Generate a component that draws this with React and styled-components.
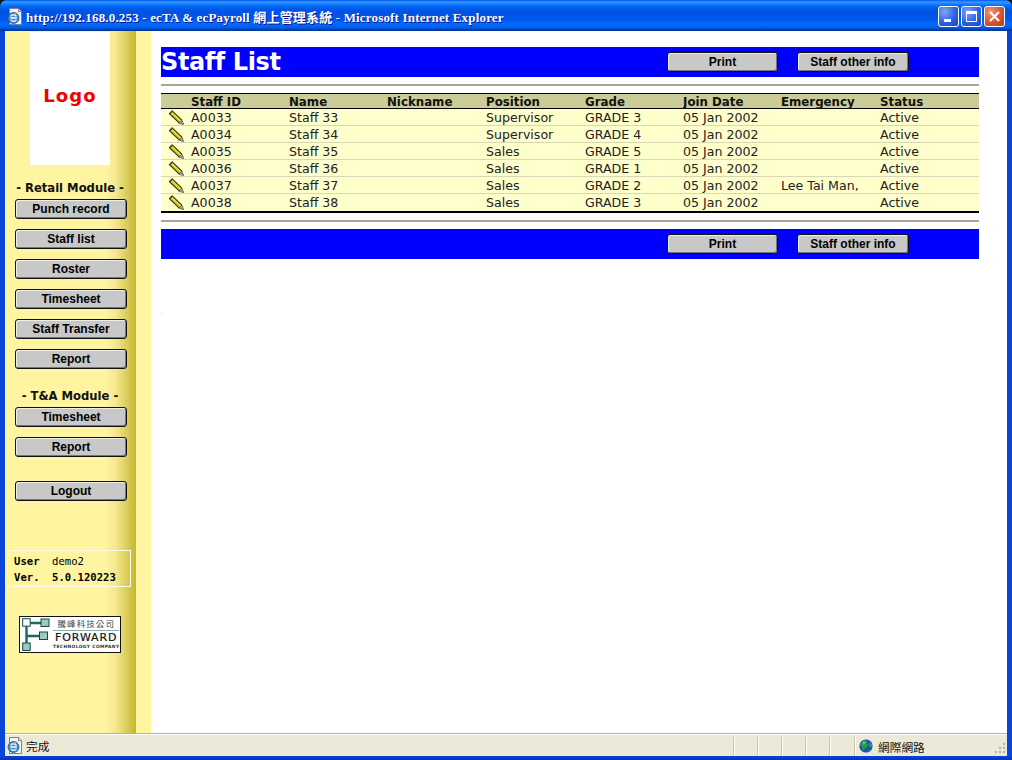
import React from "react";
import styled, { createGlobalStyle } from "styled-components";

const Global = createGlobalStyle`
  html, body { margin: 0; padding: 0; background: #1a1a1a; overflow: hidden; }
  * { box-sizing: border-box; }
`;

const Win = styled.div`
  width: 1012px; height: 760px; display: flex; flex-direction: column;
  background: #0a46d8; border-radius: 7px 7px 0 0; overflow: hidden;
`;
const TitleBar = styled.div`
  height: 31px; flex: none; display: flex; align-items: center; padding: 2px 7px 0 6px;
  background: linear-gradient(180deg,#0058EE 0,#3593FF 6%,#288EFF 10%,#127DFF 14%,#036FFC 18%,#0262EE 24%,#0057E5 30%,#0054E3 40%,#0055EB 56%,#005BF5 66%,#026AFE 76%,#0062EF 86%,#0052D6 92%,#0040AB 96%,#003092 100%);
`;
const TitleText = styled.div`
  flex: 1; margin-left: 2px; color: #fff; font: bold 13px "Liberation Serif", "Noto Sans CJK TC", serif;
  letter-spacing: 0.17px; text-shadow: 1px 1px 0 #0f1089; white-space: nowrap;
`;
const Ctrls = styled.div` display: flex; gap: 2px; `;
const Ctrl = styled.div`
  width: 21px; height: 21px; border: 1px solid #fff; border-radius: 3px; display: flex; align-items: center; justify-content: center;
  background: ${p => p.$red
    ? "radial-gradient(circle at 30% 25%, #e8987e 0, #d9593a 50%, #b8361a 100%)"
    : "radial-gradient(circle at 30% 25%, #7fa6f5 0, #2f62e0 55%, #1c44c8 100%)"};
`;
const Mid = styled.div`
  flex: 1; min-height: 0; display: flex; margin: 0 5px 0 5px; background: #fff;
`;
const Sidebar = styled.aside`
  width: 146px; flex: none; display: flex; flex-direction: column; align-items: flex-start; padding-left: 10px;
  background: linear-gradient(90deg, #FFF4A0 0, #FFF4A0 100px, #F5EA92 110px, #C6B62E 131px, #FFF4A0 131px, #FFF4A0 146px);
`;
const LogoBox = styled.div`
  width: 80px; height: 133px; margin: 1px 0 0 15px; background: #fff; display: flex; align-items: center; justify-content: center;
  color: #f00000; font: bold 18px "DejaVu Sans", sans-serif; letter-spacing: 1.1px; padding-bottom: 7px;
`;
const ModuleLabel = styled.div`
  width: 110px; height: 14px; margin-top: ${p => p.$top}px; text-align: center; white-space: nowrap;
  font: bold 11.6px/16px "DejaVu Sans", sans-serif; color: #111;
`;
const SideStack = styled.div` display: flex; flex-direction: column; gap: 10px; margin-top: ${p => p.$top}px; `;
const Btn = styled.div`
  width: ${p => p.$w}px; height: 20px; flex: none; display: flex; align-items: center; justify-content: center;
  background: #c8c8c8; border: 1px solid #111; border-radius: 3px;
  box-shadow: inset 1px 1px 0 #eee, inset -1px -1px 0 #777;
  font: bold 12px "Liberation Sans", sans-serif; color: #000; white-space: nowrap;
`;
const UserBox = styled.div`
  width: 122px; height: 37px; margin: 49px 0 0 -6px; border: 1px solid #fdfbe8; padding: 2px 0 0 4px;
  display: grid; grid-template-columns: 38px auto; grid-auto-rows: 16px; align-items: center;
  font: 10.6px "DejaVu Sans Mono", monospace; color: #000;
`;
const Key = styled.span` font-weight: bold; `;
const Val = styled.span` font-weight: ${p => p.$b ? "bold" : "normal"}; `;
const Forward = styled.div`
  width: 102px; height: 37px; margin: 29px 0 0 4px; background: #fff; border: 1px solid #111;
  display: flex; padding: 1px 2px;
`;
const FwdText = styled.div` flex: 1; display: flex; flex-direction: column; align-items: center; margin-left: 3px; color: #333; `;
const FwdCn = styled.div` font: 8.5px/11px "Noto Sans CJK TC", sans-serif; letter-spacing: 1.1px; color: #444; border-bottom: 1px solid #8aa; width: 100%; text-align: center; padding-bottom: 1px; `;
const FwdEn = styled.div` font: 11px/13px "DejaVu Sans", sans-serif; letter-spacing: .9px; color: #111; -webkit-text-stroke: .2px #111; `;
const FwdSm = styled.div` font: bold 4.4px/6px "DejaVu Sans", sans-serif; letter-spacing: .4px; color: #333; white-space: nowrap; `;

const Main = styled.main` flex: 1; min-width: 0; padding: 16px 28px 0 10px; background: #fff; `;
const BlueBar = styled.div`
  height: 30px; background: #0000ff; display: flex; align-items: center; gap: 19px; padding-right: 70px;
`;
const Title = styled.h1`
  flex: 1; margin: 0; color: #fff; font: bold 24px/30px "DejaVu Sans", sans-serif; letter-spacing: -0.4px;
`;
const Rule = styled.div` height: 2px; background: #a8a498; margin: ${p => p.$t}px 0 ${p => p.$b}px; `;
const Table = styled.div`
  border-top: 1px solid #000; border-bottom: 2px solid #000;
`;
const Row = styled.div`
  display: grid; grid-template-columns: 30px 98px 98px 99px 99px 98px 98px 99px 1fr; align-items: center;
  height: ${p => p.$head ? "15px" : "17px"};
  background: ${p => p.$head ? "#cccc99" : "#ffffcc"};
  border-bottom: 1px solid ${p => p.$head ? "#000" : p.$last ? "#ffffcc" : "#d8d8b4"};
  font: ${p => p.$head ? "bold 11.8px" : "12.6px"} "DejaVu Sans", sans-serif; color: ${p => p.$head ? "#111" : "#222"};
`;
const Cell = styled.span` white-space: nowrap; overflow: hidden; padding-top: 1px; `;
const IconCell = styled.span` display: flex; padding-left: 7px; `;
const Speck = styled.div` margin-top: 49px; font: 6px/8px "DejaVu Sans", sans-serif; color: #888; `;

const StatusBar = styled.div`
  height: 23px; flex: none; margin: 0 5px; display: flex; align-items: center; background: #ece9d8;
  border-top: 1px solid #b5b2a3; box-shadow: inset 0 1px 0 #fff; font: 11.7px "Noto Sans CJK TC", sans-serif; color: #111;
`;
const StatusMain = styled.div` width: 728px; display: flex; align-items: center; gap: 2px; padding-left: 1px; `;
const StatusCell = styled.div`
  width: ${p => p.$w}px; height: 19px; margin-top: 2px; border-left: 1px solid #c6c3b2; box-shadow: inset 1px 0 0 #fff;
  display: flex; align-items: center; gap: 5px; padding-left: ${p => p.$w > 30 ? "4px" : 0};
`;
const Grip = styled.div` margin: auto 1px 2px auto; display: flex; `;
const BottomEdge = styled.div` height: 4px; flex: none; background: linear-gradient(180deg,#0a46d8,#0831b0); `;

const Pencil = () => (
  <svg width="17" height="15" viewBox="0 0 17 15">
    <path d="M2.5 2 12.5 11.5" stroke="#222" strokeWidth="5" strokeLinecap="butt" />
    <path d="M3 2.5 12.5 11.5" stroke="#eee21e" strokeWidth="3" />
    <path d="M4 4.8 12 12.4" stroke="#9a9210" strokeWidth="1" />
    <path d="M.9 3.4 3.9.4 5 1.6 2.1 4.6z" fill="#444" />
    <path d="M10.8 13.2 14 10.2 15.6 14.6z" fill="#a8a8a0" stroke="#444" strokeWidth=".7" strokeLinejoin="round" />
  </svg>
);
const IeIcon = () => (
  <svg width="18" height="17" viewBox="0 0 18 17">
    <path d="M3.5 .5h9l3 3v13h-12z" fill="#f4f4f0" stroke="#76809c" />
    <path d="M12.5 .5v3h3" fill="#dde" stroke="#76809c" />
    <circle cx="7.5" cy="10" r="5.4" fill="#3f8fdc" stroke="#1c5ca8" />
    <path d="M4.4 10h6.4M4.6 8.4c1.2-2.2 4.6-2.2 5.8 0M10.4 12c-1.2 1.8-4.2 1.8-5.4 0" fill="none" stroke="#fff" strokeWidth="1.3" />
    <path d="M1 13.5C3 9 9 4.6 13 5 11 3.4 4 7 1 13.5z" fill="#e8a030" />
  </svg>
);
const Globe = () => (
  <svg width="14" height="14" viewBox="0 0 14 14">
    <circle cx="7" cy="7" r="6.6" fill="#1d4fb8" />
    <path d="M2 4 5 1.6 8 2 7.4 4.4 9.6 5.4 8 8.4 6 9 5 12 3.4 10.6 3 7.6 1 6.4z" fill="#23a238" />
    <path d="M10 2.6 12.8 5.4 12.6 8.6 10.6 7.6z" fill="#2fae44" />
    <path d="M8.4 10.6 11 9.6 10 12.2 8 12.8z" fill="#1b8a30" />
    <circle cx="5" cy="3.6" r="1.6" fill="#9fd0ff" opacity=".45" />
  </svg>
);
const FwdMark = () => (
  <svg width="28" height="33" viewBox="0 0 28 33" style={{ flex: "none" }}>
    <path d="M4.5 5h15M4.5 5v24M4.5 18h13" fill="none" stroke="#1d6a5a" strokeWidth="2.4" />
    <rect x="0.7" y="0.7" width="7.5" height="7.5" fill="#fff" stroke="#174a42" />
    <rect x="19" y="1" width="8" height="7.5" fill="#9ec8bc" stroke="#174a42" />
    <rect x="17.5" y="14" width="8" height="7.5" fill="#9ec8bc" stroke="#174a42" />
    <rect x="0.7" y="25" width="7.5" height="7.5" fill="#9ec8bc" stroke="#174a42" />
  </svg>
);
const GripDots = () => (
  <svg width="12" height="12" viewBox="0 0 12 12" fill="#b5b2a0">
    <rect x="9" y="1" width="2" height="2" /><rect x="5" y="5" width="2" height="2" /><rect x="9" y="5" width="2" height="2" />
    <rect x="1" y="9" width="2" height="2" /><rect x="5" y="9" width="2" height="2" /><rect x="9" y="9" width="2" height="2" />
  </svg>
);

const rows = [
  ["A0033", "Staff 33", "", "Supervisor", "GRADE 3", "05 Jan 2002", "", "Active"],
  ["A0034", "Staff 34", "", "Supervisor", "GRADE 4", "05 Jan 2002", "", "Active"],
  ["A0035", "Staff 35", "", "Sales", "GRADE 5", "05 Jan 2002", "", "Active"],
  ["A0036", "Staff 36", "", "Sales", "GRADE 1", "05 Jan 2002", "", "Active"],
  ["A0037", "Staff 37", "", "Sales", "GRADE 2", "05 Jan 2002", "Lee Tai Man,", "Active"],
  ["A0038", "Staff 38", "", "Sales", "GRADE 3", "05 Jan 2002", "", "Active"],
];
const heads = ["Staff ID", "Name", "Nickname", "Position", "Grade", "Join Date", "Emergency", "Status"];

const Actions = () => (
  <>
    <Btn $w={111}>Print</Btn>
    <Btn $w={112}>Staff other info</Btn>
  </>
);

export default function App() {
  return (
    <Win>
      <Global />
      <TitleBar>
        <IeIcon />
        <TitleText>http://192.168.0.253 - ecTA &amp; ecPayroll 網上管理系統 - Microsoft Internet Explorer</TitleText>
        <Ctrls>
          <Ctrl>
            <svg width="13" height="13" viewBox="0 0 13 13"><rect x="2" y="9" width="7" height="3" fill="#fff" /></svg>
          </Ctrl>
          <Ctrl>
            <svg width="13" height="13" viewBox="0 0 13 13"><path d="M1.5 3.5h10v8h-10z" fill="none" stroke="#fff" /><rect x="1" y="1" width="11" height="3" fill="#fff" /></svg>
          </Ctrl>
          <Ctrl $red>
            <svg width="13" height="13" viewBox="0 0 13 13"><path d="M2 2l9 9M11 2l-9 9" stroke="#fff" strokeWidth="2.2" /></svg>
          </Ctrl>
        </Ctrls>
      </TitleBar>
      <Mid>
        <Sidebar>
          <LogoBox>Logo</LogoBox>
          <ModuleLabel $top={15}>- Retail Module -</ModuleLabel>
          <SideStack $top={5}>
            {["Punch record", "Staff list", "Roster", "Timesheet", "Staff Transfer", "Report"].map(t => <Btn $w={112} key={t}>{t}</Btn>)}
          </SideStack>
          <ModuleLabel $top={19}>- T&amp;A Module -</ModuleLabel>
          <SideStack $top={5}>
            <Btn $w={112}>Timesheet</Btn>
            <Btn $w={112}>Report</Btn>
          </SideStack>
          <SideStack $top={24}><Btn $w={112}>Logout</Btn></SideStack>
          <UserBox>
            <Key>User</Key><Val>demo2</Val>
            <Key>Ver.</Key><Val $b>5.0.120223</Val>
          </UserBox>
          <Forward>
            <FwdMark />
            <FwdText>
              <FwdCn>騰峰科技公司</FwdCn>
              <FwdEn>FORWARD</FwdEn>
              <FwdSm>TECHNOLOGY COMPANY</FwdSm>
            </FwdText>
          </Forward>
        </Sidebar>
        <Main>
          <BlueBar><Title>Staff List</Title><Actions /></BlueBar>
          <Rule $t={7} $b={7} />
          <Table>
            <Row $head>
              <span />
              {heads.map(h => <Cell key={h}>{h}</Cell>)}
            </Row>
            {rows.map((r, i) => (
              <Row key={r[0]} $last={i === rows.length - 1}>
                <IconCell><Pencil /></IconCell>
                {r.map((c, j) => <Cell key={j}>{c}</Cell>)}
              </Row>
            ))}
          </Table>
          <Rule $t={7} $b={7} />
          <BlueBar><Title /><Actions /></BlueBar>
          <Speck>.</Speck>
        </Main>
      </Mid>
      <StatusBar>
        <StatusMain><IeIcon /><span>完成</span></StatusMain>
        <StatusCell $w={24} /><StatusCell $w={24} /><StatusCell $w={24} /><StatusCell $w={24} /><StatusCell $w={25} />
        <StatusCell $w={120}><Globe /><span>網際網路</span></StatusCell>
        <Grip><GripDots /></Grip>
      </StatusBar>
      <BottomEdge />
    </Win>
  );
}
